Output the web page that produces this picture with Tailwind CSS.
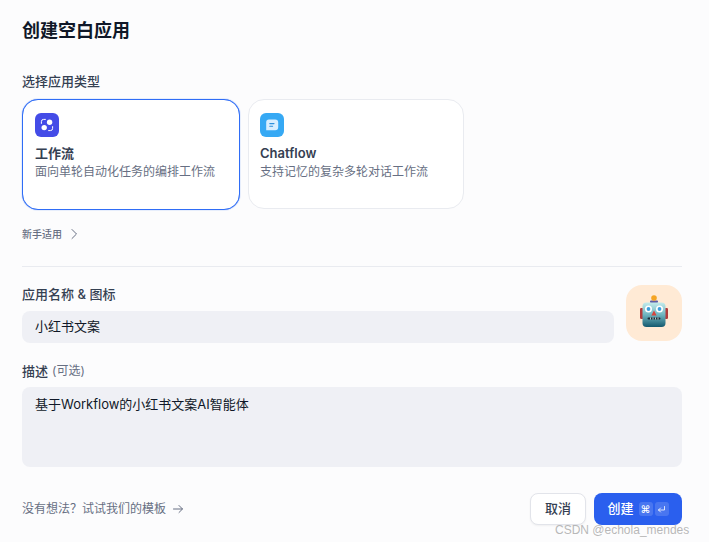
<!DOCTYPE html>
<html lang="zh-CN">
<head>
  <meta charset="UTF-8" />
  <meta name="viewport" content="width=device-width, initial-scale=1.0" />
  <title>创建空白应用</title>
  <script src="https://cdn.jsdelivr.net/npm/@tailwindcss/browser@4"></script>
</head>
<body class="bg-[#fcfcfd] text-[#1d2939] font-['Inter','Noto_Sans_CJK_SC',sans-serif] overflow-hidden">
  <div class="relative w-[709px] h-[542px] overflow-hidden pl-[22px] pr-[27px] pt-[19px]">
    <h1 class="text-[18px] leading-[24px] font-semibold text-[#101828]">创建空白应用</h1>

    <div class="mt-[30px] text-[13px] leading-[16px] font-medium text-[#354052]">选择应用类型</div>
    <div class="mt-[10px] flex gap-[8px]">
      <div class="w-[218px] h-[111px] -ml-[0.5px] rounded-[16px] bg-white border border-[#2f6df6] shadow-[0_0_1px_#2f6df6] pl-[12.500px] pt-[13px]">
        <div class="w-[24px] h-[24px] rounded-[6px] bg-[#444ce7] flex items-center justify-center">
          <svg width="16" height="16" viewBox="0 0 16 16" fill="none">
            <circle cx="10.600" cy="5.200" r="2.700" fill="#fff"/>
            <circle cx="5.200" cy="10.600" r="2.700" fill="#fff"/>
            <path d="M2.400 6.400V4.600a2.200 2.200 0 0 1 2.200-2.200h1.800M13.600 9.600v1.800a2.200 2.200 0 0 1-2.200 2.200H9.600" stroke="#fff" stroke-width="1" stroke-linecap="round"/>
          </svg>
        </div>
        <div class="mt-[7px] text-[13px] leading-[18px] font-semibold text-[#354052]">工作流</div>
        <div class="mt-[2px] text-[12px] leading-[16px] text-[#676f83]">面向单轮自动化任务的编排工作流</div>
      </div>
      <div class="w-[216px] h-[110px] rounded-[16px] bg-white border border-[#e9ebf0] pl-[11.500px] pt-[12.500px]">
        <div class="w-[24px] h-[24px] rounded-[6px] bg-[#36a9f4] flex items-center justify-center">
          <svg width="16" height="16" viewBox="0 0 16 16" fill="none">
            <path d="M5 2.600h6.200a3 3 0 0 1 3 3v4.600a3 3 0 0 1-3 3H2.200V5.400A2.800 2.800 0 0 1 5 2.600Z" fill="#d9efff"/>
            <path d="M5.800 6.600h4.200M5.800 9.200h2.800" stroke="#2e90dc" stroke-width="1.100" stroke-linecap="round"/>
          </svg>
        </div>
        <div class="mt-[7px] text-[13px] leading-[18px] font-semibold text-[#354052]">Chatflow</div>
        <div class="mt-[2px] text-[12px] leading-[16px] text-[#676f83]">支持记忆的复杂多轮对话工作流</div>
      </div>
    </div>

    <div class="mt-[17px] h-[14px] flex items-center gap-[6px] text-[10px] font-medium text-[#676f83]">
      <span>新手适用</span>
      <svg width="12" height="12" viewBox="0 0 12 12" fill="none"><path d="M4 1.500 8.500 6 4 10.500" stroke="#676f83" stroke-width="1" stroke-linecap="round" stroke-linejoin="round"/></svg>
    </div>

    <div class="mt-[25px] h-px bg-[#e9ebf0]"></div>

    <div class="mt-[18px] flex gap-[12px]">
      <div class="flex-1">
        <div class="mt-[1px] text-[13px] leading-[16px] font-medium text-[#354052]">应用名称 &amp; 图标</div>
        <div class="mt-[9px] h-[32px] rounded-[8px] bg-[#eff0f5] px-[13px] flex items-center text-[13px] text-[#101828]">小红书文案</div>
      </div>
      <div class="w-[56px] h-[56px] rounded-[16px] bg-[#ffead5] flex items-center justify-center">
        <svg class="mb-[5px]" width="28" height="32" viewBox="0 0 28 32">
          <defs>
            <linearGradient id="head" x1="0" y1="0" x2="0" y2="1">
              <stop offset="0" stop-color="#c4ecec"/>
              <stop offset="0.5" stop-color="#6fb4bf"/>
              <stop offset="1" stop-color="#14596e"/>
            </linearGradient>
          </defs>
          <rect x="0" y="13" width="3.500" height="11" rx="1.200" fill="#b23b3b"/>
          <rect x="24.500" y="13" width="3.500" height="11" rx="1.200" fill="#b23b3b"/>
          <rect x="10" y="5.500" width="8" height="2.500" rx="1" fill="#5f5aa2"/>
          <circle cx="14" cy="3" r="2.800" fill="#f5a524"/>
          <rect x="2.500" y="7.500" width="23" height="24.500" rx="4" fill="url(#head)"/>
          <circle cx="8.500" cy="14" r="3.500" fill="#fff"/><circle cx="8.500" cy="14" r="1.900" fill="#3d9fdc"/>
          <circle cx="19.500" cy="14" r="3.500" fill="#fff"/><circle cx="19.500" cy="14" r="1.900" fill="#3d9fdc"/>
          <path d="M14 15.500 16.600 20.500h-5.200Z" fill="#d8443c"/>
          <path d="M8.500 23.500h11" stroke="#1b2b36" stroke-width="2" stroke-linecap="round"/>
          <path d="M10.500 22.500v2M13 22.500v2M15.500 22.500v2M18 22.500v2" stroke="#dcefee" stroke-width="0.800"/>
        </svg>
      </div>
    </div>

    <div class="mt-[20px] h-[16px] flex items-center gap-[4px] text-[13px] leading-[16px]">
      <span class="font-medium text-[#354052]">描述</span>
      <span class="text-[12px] text-[#676f83]">(可选)</span>
    </div>
    <div class="mt-[8px] h-[80px] rounded-[8px] bg-[#eff0f5] px-[13px] py-[7px] text-[13px] leading-[20px] text-[#101828]">基于Workflow的小红书文案AI智能体</div>

    <div class="mt-[26px] h-[32px] flex items-center justify-between">
      <div class="flex items-center gap-[6px] text-[12px] text-[#676f83]">
        <span>没有想法？试试我们的模板</span>
        <svg width="12" height="12" viewBox="0 0 12 12" fill="none"><path d="M1.500 6h9M7 2.500 10.500 6 7 9.500" stroke="#676f83" stroke-width="1" stroke-linecap="round" stroke-linejoin="round"/></svg>
      </div>
      <div class="flex gap-[8px]">
        <button class="w-[56px] h-[32px] rounded-[8px] bg-white border border-[#e2e4ea] shadow-xs text-[13px] font-medium text-[#354052]">取消</button>
        <button class="w-[88px] h-[32px] rounded-[8px] bg-[#2a5fee] flex items-center justify-center gap-[4px] text-[13px] font-medium text-white">
          <span>创建</span>
          <span class="flex gap-[2px] ml-[1px]">
            <span class="w-[14px] h-[14px] rounded-[3px] bg-white/15 flex items-center justify-center text-[10px] leading-none">⌘</span>
            <span class="w-[14px] h-[14px] rounded-[3px] bg-white/15 flex items-center justify-center">
              <svg width="9" height="9" viewBox="0 0 9 9" fill="none"><path d="M7.500 1.500v3.500H1.500M3.500 3 1.500 5l2 2" stroke="#fff" stroke-width="0.800" stroke-linecap="round" stroke-linejoin="round"/></svg>
            </span>
          </span>
        </button>
      </div>
    </div>

    <div class="absolute left-[555px] top-[522px] text-[12px] leading-[16px] text-[#a6a6a6]/80 font-['Liberation_Sans',sans-serif] whitespace-nowrap">CSDN @echola_mendes</div>
  </div>
</body>
</html>
